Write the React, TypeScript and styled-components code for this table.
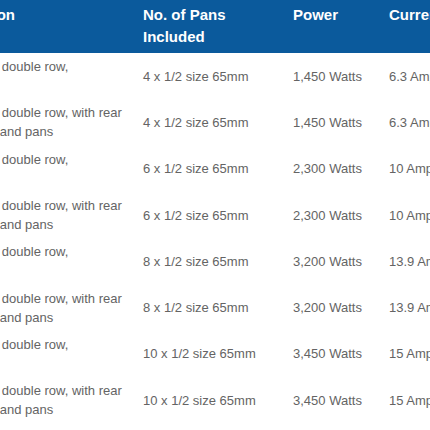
import styled, { createGlobalStyle } from 'styled-components';

const GlobalStyle = createGlobalStyle`
  html, body {
    margin: 0;
    padding: 0;
    background: #fff;
  }
`;

const Viewport = styled.div`
  width: 430px;
  height: 430px;
  overflow: hidden;
`;

const Table = styled.table`
  margin-left: -77.5px;
  border-collapse: collapse;
  table-layout: fixed;
  width: 600px;
  font-family: "Liberation Sans", Arial, sans-serif;
`;

const HeadCell = styled.th`
  background: #0b5a9c;
  color: #fff;
  font-size: 15px;
  font-weight: bold;
  line-height: 22px;
  text-align: left;
  vertical-align: top;
  padding: 4px 10px 5px;
  white-space: nowrap;
`;

const Cell = styled.td`
  color: #646464;
  font-size: 13px;
  line-height: 19.15px;
  text-align: left;
  vertical-align: middle;
  padding: 4px 10px;
  white-space: nowrap;
`;

interface Unit {
  desc: [string, string];
  pans: string;
  power: string;
  current: string;
}

const units: Unit[] = [
  { desc: ['Bain Marie, double row,', '4 pans'], pans: '4 x 1/2 size 65mm', power: '1,450 Watts', current: '6.3 Amps' },
  { desc: ['Bain Marie, double row, with rear', 'heat lamps and pans'], pans: '4 x 1/2 size 65mm', power: '1,450 Watts', current: '6.3 Amps' },
  { desc: ['Bain Marie, double row,', '6 pans'], pans: '6 x 1/2 size 65mm', power: '2,300 Watts', current: '10 Amps' },
  { desc: ['Bain Marie, double row, with rear', 'heat lamps and pans'], pans: '6 x 1/2 size 65mm', power: '2,300 Watts', current: '10 Amps' },
  { desc: ['Bain Marie, double row,', '8 pans'], pans: '8 x 1/2 size 65mm', power: '3,200 Watts', current: '13.9 Amps' },
  { desc: ['Bain Marie, double row, with rear', 'heat lamps and pans'], pans: '8 x 1/2 size 65mm', power: '3,200 Watts', current: '13.9 Amps' },
  { desc: ['Bain Marie, double row,', '10 pans'], pans: '10 x 1/2 size 65mm', power: '3,450 Watts', current: '15 Amps' },
  { desc: ['Bain Marie, double row, with rear', 'heat lamps and pans'], pans: '10 x 1/2 size 65mm', power: '3,450 Watts', current: '15 Amps' },
];

export default function App() {
  return (
    <Viewport>
      <GlobalStyle />
      <Table>
        <colgroup>
          <col style={{ width: 210.5 }} />
          <col style={{ width: 150 }} />
          <col style={{ width: 96 }} />
          <col style={{ width: 143.5 }} />
        </colgroup>
        <thead>
          <tr>
            <HeadCell>Description</HeadCell>
            <HeadCell>No. of Pans<br />Included</HeadCell>
            <HeadCell>Power</HeadCell>
            <HeadCell>Current</HeadCell>
          </tr>
        </thead>
        <tbody>
          {units.map((u, i) => (
            <tr key={i}>
              <Cell>{u.desc[0]}<br />{u.desc[1]}</Cell>
              <Cell>{u.pans}</Cell>
              <Cell>{u.power}</Cell>
              <Cell>{u.current}</Cell>
            </tr>
          ))}
        </tbody>
      </Table>
    </Viewport>
  );
}
